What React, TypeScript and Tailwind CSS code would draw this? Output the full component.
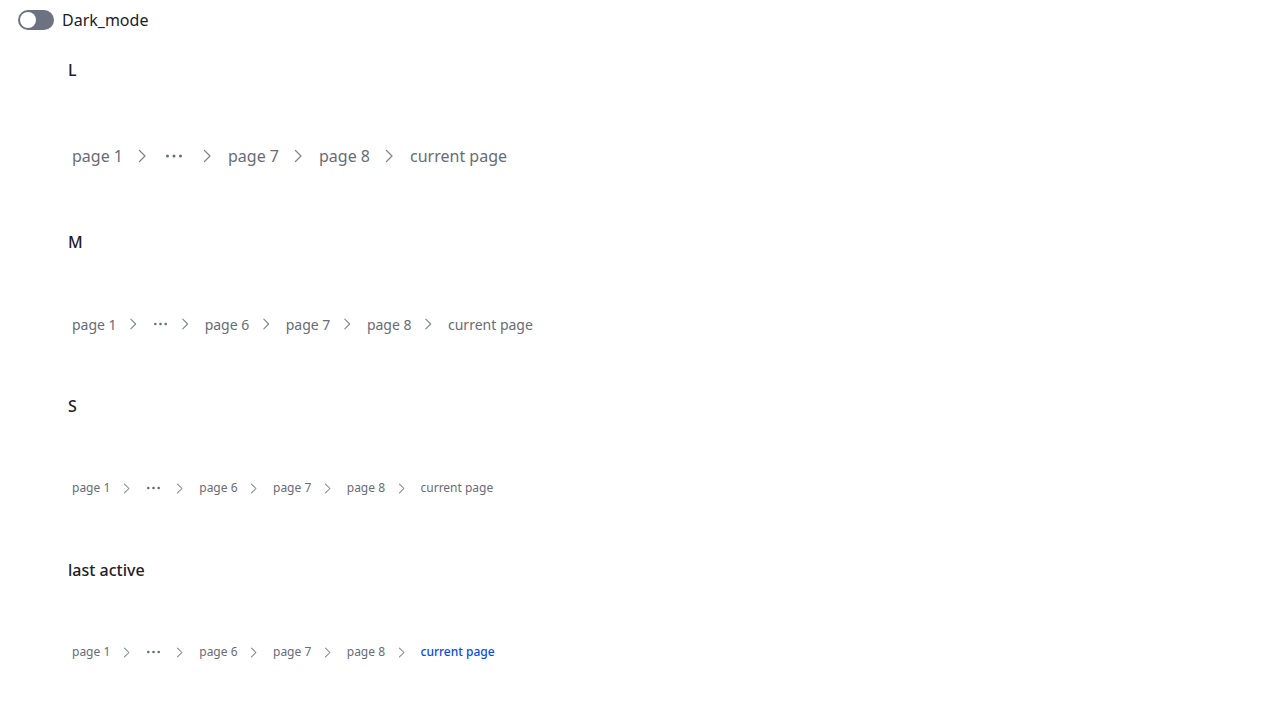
type Size = 'l' | 'm' | 's'

interface SizeConfig {
  text: string
  row: string
  icon: number
  sep: string
  dots: string
  dotsW: number
}

const SIZES: Record<Size, SizeConfig> = {
  l: { text: 'text-[16px]', row: 'h-8', icon: 16, sep: 'ml-[7px] mr-[9px]', dots: 'pl-[7px] pr-[10px]', dotsW: 16 },
  m: { text: 'text-[14px]', row: 'h-7', icon: 14, sep: 'ml-[5.5px] mr-[9px]', dots: 'pl-[5px] pr-[5px]', dotsW: 13 },
  s: { text: 'text-[12px]', row: 'h-6', icon: 13, sep: 'ml-[5.5px] mr-[9px]', dots: 'pl-[5px] pr-[8px]', dotsW: 13 },
}

function Chevron({ size, className }: { size: number; className?: string }) {
  return (
    <svg width={size} height={size} viewBox="0 0 16 16" fill="none" className={className}>
      <path d="M5.5 2.5 11 8l-5.5 5.5" stroke="currentColor" strokeWidth={1.25} strokeLinecap="round" strokeLinejoin="round" />
    </svg>
  )
}

function Dots({ width }: { width: number }) {
  const r = width >= 16 ? 1.5 : 1.3
  return (
    <svg width={width} height={4} viewBox={`0 0 ${width} 4`} fill="currentColor">
      <circle cx={r} cy={2} r={r} />
      <circle cx={width / 2} cy={2} r={r} />
      <circle cx={width - r} cy={2} r={r} />
    </svg>
  )
}

function Breadcrumbs({ items, size, lastActive }: { items: string[]; size: Size; lastActive?: boolean }) {
  const cfg = SIZES[size]
  return (
    <nav className={`flex items-center ${cfg.row} ${cfg.text} text-[#676c78]`}>
      {items.map((item, i) => {
        const isLast = i === items.length - 1
        return (
          <div key={i} className="flex items-center">
            {item === '...' ? (
              <span className={`flex items-center ${cfg.dots}`}>
                <Dots width={cfg.dotsW} />
              </span>
            ) : (
              <span className={`px-1 ${isLast && lastActive ? 'text-[#0a4ae6] font-medium' : ''}`}>
                {item}
              </span>
            )}
            {!isLast && <Chevron size={cfg.icon} className={`${cfg.sep} text-[#80858f]`} />}
          </div>
        )
      })}
    </nav>
  )
}

function Section({ title, children, headGap, rowGap }: { title: string; children: React.ReactNode; headGap: string; rowGap: string }) {
  return (
    <section className={rowGap}>
      <h2 className={`h-6 leading-6 text-[16px] font-medium text-[#1d2128] ${headGap}`}>{title}</h2>
      {children}
    </section>
  )
}

export default function App() {
  const full = ['page 1', '...', 'page 6', 'page 7', 'page 8', 'current page']
  return (
    <div className="min-h-screen bg-white" style={{ fontFamily: '"Noto Sans", Inter, sans-serif' }}>
      <div className="flex items-center gap-2 pl-[18px] pt-[10px] h-[30px]">
        <div className="w-9 h-5 rounded-full bg-[#6d7280] flex items-center px-[2px]">
          <div className="w-4 h-4 rounded-full bg-white" />
        </div>
        <span className="text-[16px] text-[#1d2128]">Dark_mode</span>
      </div>
      <div className="pl-[68px] pt-[28px]">
        <Section title="L" headGap="mb-[58px]" rowGap="mb-[58px]">
          <Breadcrumbs size="l" items={['page 1', '...', 'page 7', 'page 8', 'current page']} />
        </Section>
        <Section title="M" headGap="mb-[56px]" rowGap="mb-[56px]">
          <Breadcrumbs size="m" items={full} />
        </Section>
        <Section title="S" headGap="mb-[58px]" rowGap="mb-[58px]">
          <Breadcrumbs size="s" items={full} />
        </Section>
        <Section title="last active" headGap="mb-[58px]" rowGap="">
          <Breadcrumbs size="s" items={full} lastActive />
        </Section>
      </div>
    </div>
  )
}
